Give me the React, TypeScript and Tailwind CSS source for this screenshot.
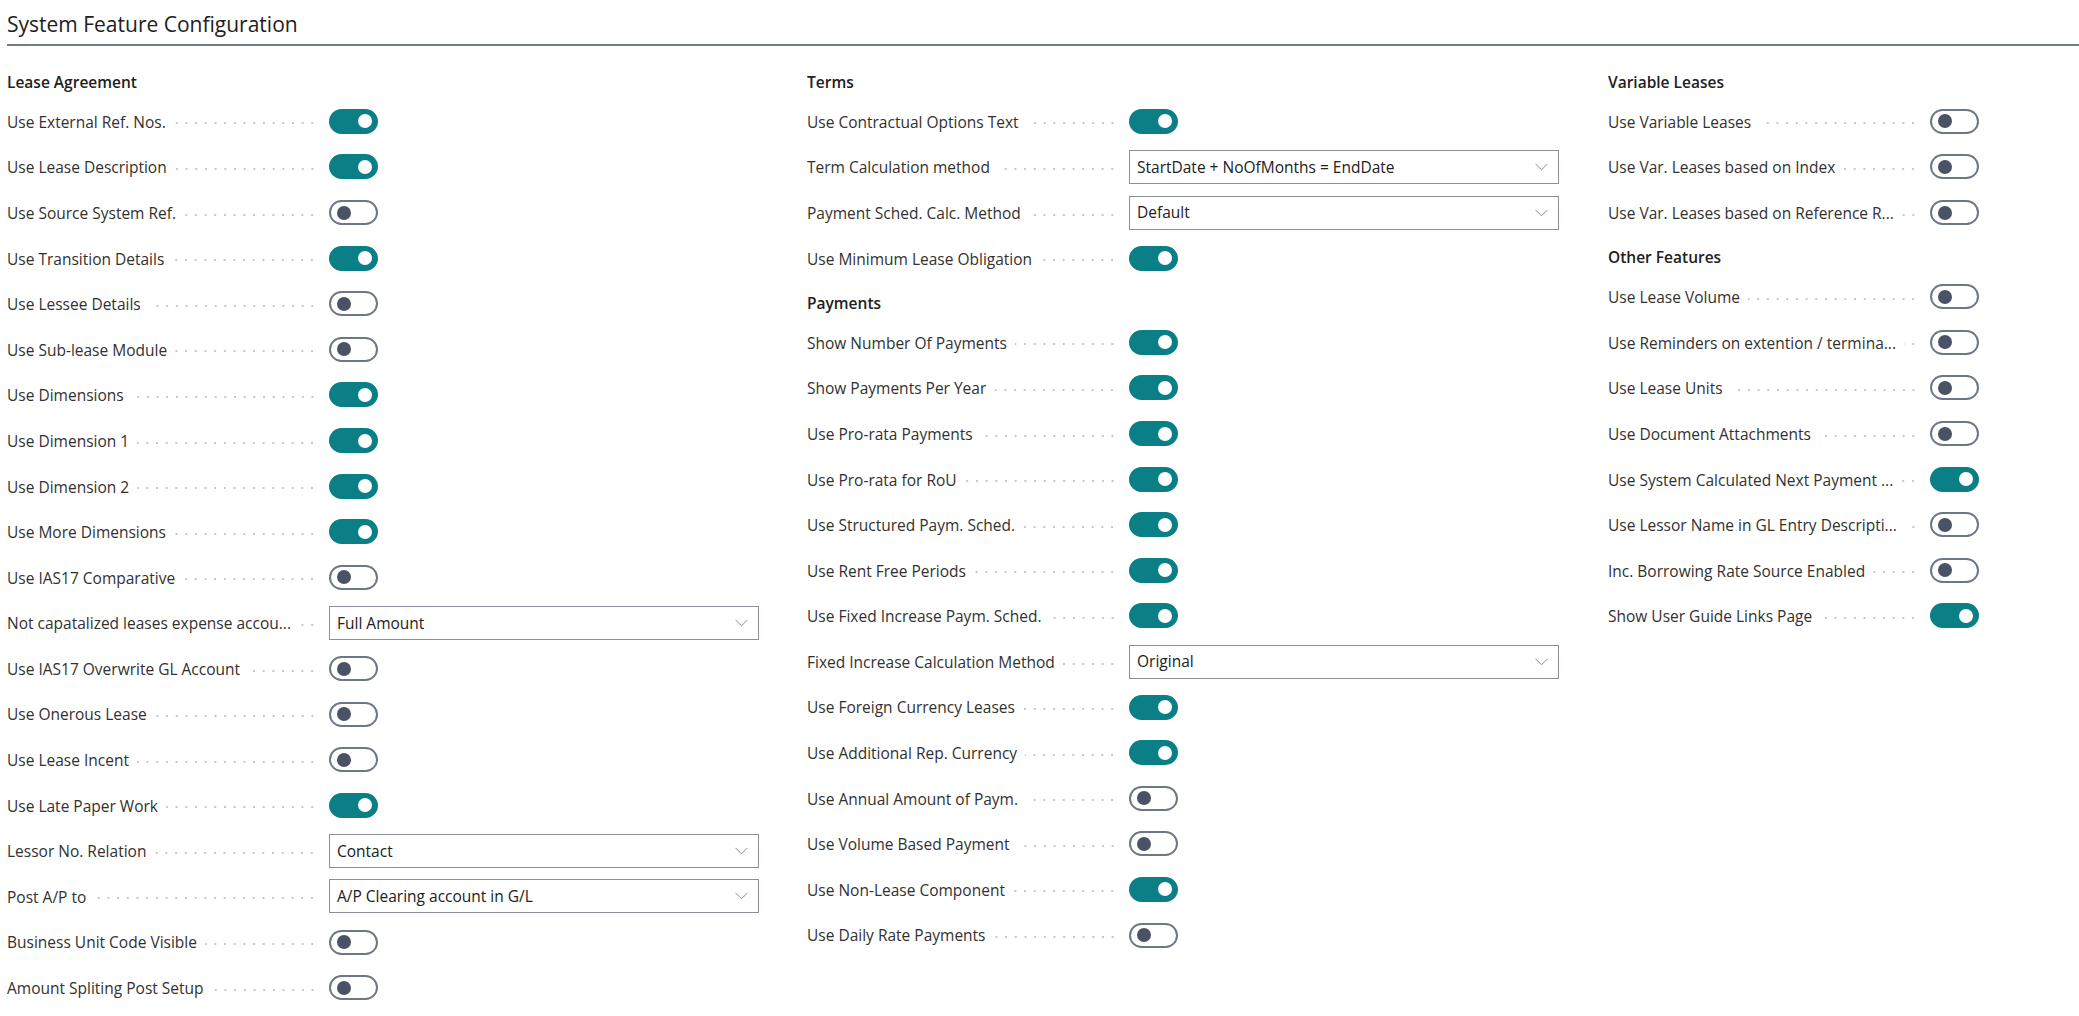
import React from "react";

type Item =
  | { kind: "header"; text: string }
  | { kind: "toggle"; label: string; on: boolean }
  | { kind: "select"; label: string; value: string };

const col1: Item[] = [
  { kind: "header", text: "Lease Agreement" },
  { kind: "toggle", label: "Use External Ref. Nos.", on: true },
  { kind: "toggle", label: "Use Lease Description", on: true },
  { kind: "toggle", label: "Use Source System Ref.", on: false },
  { kind: "toggle", label: "Use Transition Details", on: true },
  { kind: "toggle", label: "Use Lessee Details", on: false },
  { kind: "toggle", label: "Use Sub-lease Module", on: false },
  { kind: "toggle", label: "Use Dimensions", on: true },
  { kind: "toggle", label: "Use Dimension 1", on: true },
  { kind: "toggle", label: "Use Dimension 2", on: true },
  { kind: "toggle", label: "Use More Dimensions", on: true },
  { kind: "toggle", label: "Use IAS17 Comparative", on: false },
  { kind: "select", label: "Not capatalized leases expense accou...", value: "Full Amount" },
  { kind: "toggle", label: "Use IAS17 Overwrite GL Account", on: false },
  { kind: "toggle", label: "Use Onerous Lease", on: false },
  { kind: "toggle", label: "Use Lease Incent", on: false },
  { kind: "toggle", label: "Use Late Paper Work", on: true },
  { kind: "select", label: "Lessor No. Relation", value: "Contact" },
  { kind: "select", label: "Post A/P to", value: "A/P Clearing account in G/L" },
  { kind: "toggle", label: "Business Unit Code Visible", on: false },
  { kind: "toggle", label: "Amount Spliting Post Setup", on: false },
];

const col2: Item[] = [
  { kind: "header", text: "Terms" },
  { kind: "toggle", label: "Use Contractual Options Text", on: true },
  { kind: "select", label: "Term Calculation method", value: "StartDate + NoOfMonths = EndDate" },
  { kind: "select", label: "Payment Sched. Calc. Method", value: "Default" },
  { kind: "toggle", label: "Use Minimum Lease Obligation", on: true },
  { kind: "header", text: "Payments" },
  { kind: "toggle", label: "Show Number Of Payments", on: true },
  { kind: "toggle", label: "Show Payments Per Year", on: true },
  { kind: "toggle", label: "Use Pro-rata Payments", on: true },
  { kind: "toggle", label: "Use Pro-rata for RoU", on: true },
  { kind: "toggle", label: "Use Structured Paym. Sched.", on: true },
  { kind: "toggle", label: "Use Rent Free Periods", on: true },
  { kind: "toggle", label: "Use Fixed Increase Paym. Sched.", on: true },
  { kind: "select", label: "Fixed Increase Calculation Method", value: "Original" },
  { kind: "toggle", label: "Use Foreign Currency Leases", on: true },
  { kind: "toggle", label: "Use Additional Rep. Currency", on: true },
  { kind: "toggle", label: "Use Annual Amount of Paym.", on: false },
  { kind: "toggle", label: "Use Volume Based Payment", on: false },
  { kind: "toggle", label: "Use Non-Lease Component", on: true },
  { kind: "toggle", label: "Use Daily Rate Payments", on: false },
];

const col3: Item[] = [
  { kind: "header", text: "Variable Leases" },
  { kind: "toggle", label: "Use Variable Leases", on: false },
  { kind: "toggle", label: "Use Var. Leases based on Index", on: false },
  { kind: "toggle", label: "Use Var. Leases based on Reference R...", on: false },
  { kind: "header", text: "Other Features" },
  { kind: "toggle", label: "Use Lease Volume", on: false },
  { kind: "toggle", label: "Use Reminders on extention / termina...", on: false },
  { kind: "toggle", label: "Use Lease Units", on: false },
  { kind: "toggle", label: "Use Document Attachments", on: false },
  { kind: "toggle", label: "Use System Calculated Next Payment ...", on: true },
  { kind: "toggle", label: "Use Lessor Name in GL Entry Descripti...", on: false },
  { kind: "toggle", label: "Inc. Borrowing Rate Source Enabled", on: false },
  { kind: "toggle", label: "Show User Guide Links Page", on: true },
];

function Toggle({ on }: { on: boolean }) {
  if (on) {
    return (
      <div className="flex h-[25px] w-[49px] shrink-0 items-center justify-end rounded-full border-2 border-[#0b7f86] bg-[#0b7f86] pr-[4px]">
        <div className="h-[14px] w-[14px] rounded-full bg-white" />
      </div>
    );
  }
  return (
    <div className="flex h-[25px] w-[49px] shrink-0 items-center rounded-full border-2 border-[#6e7786] bg-white pl-[6px]">
      <div className="h-[14px] w-[14px] rounded-full bg-[#4a5366]" />
    </div>
  );
}

function Select({ value }: { value: string }) {
  return (
    <div className="flex h-[34px] w-[430px] shrink-0 items-center justify-between border border-[#8a8f98] bg-white pl-[7px] pr-[10px]">
      <span className="pt-[1px] text-[15.5px] text-[#212121]">{value}</span>
      <svg width="13" height="8" viewBox="0 0 13 8" fill="none">
        <path d="M0.5 0.8 L6.5 6.8 L12.5 0.8" stroke="#8c8c8c" strokeWidth="1" />
      </svg>
    </div>
  );
}

function Row({ label, children }: { label: string; children: React.ReactNode }) {
  return (
    <div className="flex h-[45.6px] items-center">
      <div className="flex w-[322px] shrink-0 items-center">
        <span className="truncate whitespace-nowrap pt-[2px] text-[15.5px] text-[#323130]">{label}</span>
        <div className="ml-[8px] mr-[12px] h-[4px] min-w-[4px] flex-1 translate-y-[2px] bg-[radial-gradient(circle,#c6c6c6_1px,transparent_1.4px)] bg-[length:9.7px_4px] bg-right bg-repeat-x" />
      </div>
      {children}
    </div>
  );
}

function Column({ items, width }: { items: Item[]; width: string }) {
  return (
    <div className={`flex flex-col ${width}`}>
      {items.map((it, i) => {
        if (it.kind === "header") {
          return (
            <div key={i} className="h-[38.6px] pt-[12px] text-[15.5px] font-semibold leading-[20px] text-[#212121]">
              {it.text}
            </div>
          );
        }
        if (it.kind === "toggle") {
          return (
            <Row key={i} label={it.label}>
              <Toggle on={it.on} />
            </Row>
          );
        }
        return (
          <Row key={i} label={it.label}>
            <Select value={it.value} />
          </Row>
        );
      })}
    </div>
  );
}

export default function App() {
  return (
    <div className="min-h-[1016px] w-full bg-white font-['Open_Sans',sans-serif]">
      <div className="ml-[7px] border-b-2 border-[#747c88] pb-[6px] pt-[10px] text-[21px] leading-[28px] text-[#212121]">
        System Feature Configuration
      </div>
      <div className="mt-[14px] flex pl-[7px]">
        <Column items={col1} width="w-[800px]" />
        <Column items={col2} width="w-[801px]" />
        <Column items={col3} width="w-[460px]" />
      </div>
    </div>
  );
}
